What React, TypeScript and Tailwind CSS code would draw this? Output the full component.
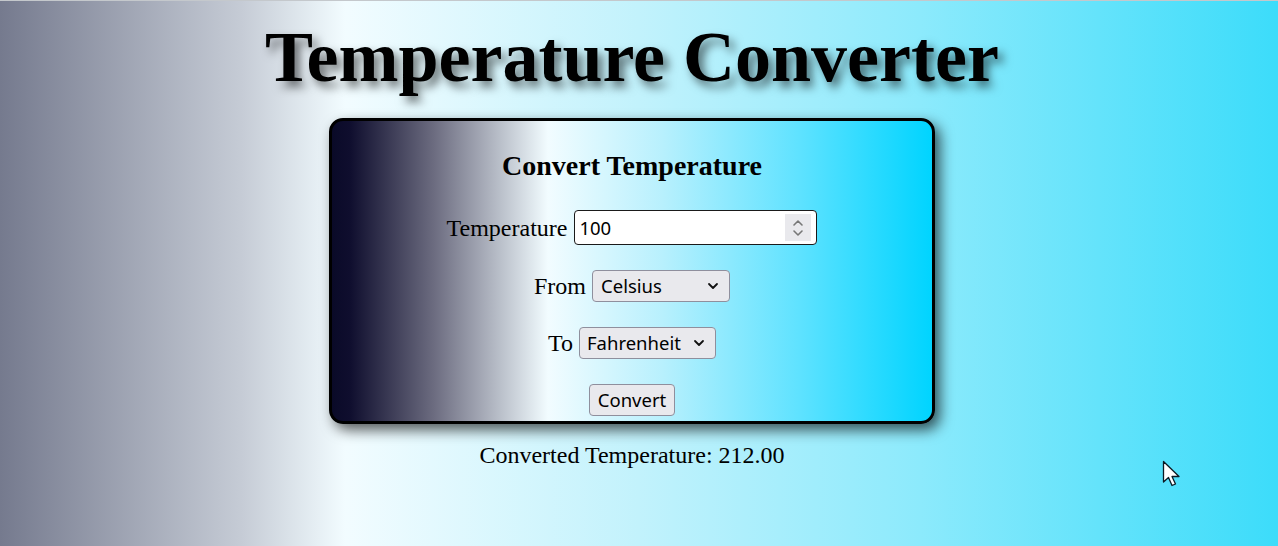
import { useState } from "react";

function Chevron() {
  return (
    <svg width="12" height="8" viewBox="0 0 12 8" className="pointer-events-none absolute right-[11px] top-1/2 -translate-y-1/2">
      <path d="M2 2 L6 6 L10 2" fill="none" stroke="#111" strokeWidth="1.8" strokeLinecap="round" strokeLinejoin="round" />
    </svg>
  );
}

function Cursor() {
  return (
    <svg width="20" height="30" viewBox="0 0 20 30" className="absolute left-[1162px] top-[459px]">
      <path d="M1.5 1.5 L1.5 22 L6.5 17.5 L10 25.5 L13.5 24 L10 16.5 L17 16.5 Z" fill="#fff" stroke="#0c1a24" strokeWidth="1.3" strokeLinejoin="round" />
    </svg>
  );
}

export default function App() {
  const [temp, setTemp] = useState("100");
  const [from, setFrom] = useState("Celsius");
  const [to, setTo] = useState("Fahrenheit");

  const serif = "font-['Liberation_Serif','Times_New_Roman',serif]";
  const sans = "font-['Noto_Sans','Open_Sans',sans-serif]";

  return (
    <main className="relative min-h-screen overflow-hidden border-t border-[#c4c8cc] bg-[linear-gradient(to_right,#757a8e_0%,#c6ccd6_19%,#f2fcff_27%,#c2f2fc_50%,#8ceafc_72%,#3cdcfa_100%)] pr-[14px] text-black">
      <div className="flex flex-col items-center">
        <h1 className={`${serif} mt-[20px] text-[72px] font-bold leading-none [text-shadow:5px_6px_10px_rgba(0,0,0,0.55)]`}>
          Temperature Converter
        </h1>

        <section className="mt-[25px] box-border flex h-[306px] w-[606px] flex-col items-center rounded-[14px] border-[3px] border-black bg-[linear-gradient(to_right,#0a0a28_0%,#0f0e2e_3%,#6c6c80_17%,#f2fcff_36%,#b8f0fd_55%,#5ee2ff_78%,#00d4ff_100%)] pt-[29px] shadow-[5px_6px_14px_rgba(0,0,0,0.65)]">
          <h2 className={`${serif} text-[28px] font-bold leading-[32px]`}>Convert Temperature</h2>

          <div className="mt-[28px] flex h-[35px] items-center gap-[7px]">
            <label className={`${serif} text-[24px] leading-[28px]`}>Temperature</label>
            <div className="flex h-[35px] w-[243px] items-center rounded-[4px] border border-[#1a1a1a] bg-white pl-[4px] pr-[5px]">
              <input
                value={temp}
                onChange={(e) => setTemp(e.target.value)}
                className={`${sans} min-w-0 flex-1 bg-transparent text-[18.5px] outline-none`}
              />
              <div className="flex h-[27px] w-[26px] flex-col items-center justify-center bg-[#e9e9ed]">
                <svg width="12" height="22" viewBox="0 0 12 22">
                  <path d="M2 8 L6 4 L10 8" fill="none" stroke="#777" strokeWidth="1.6" strokeLinecap="round" strokeLinejoin="round" />
                  <path d="M2 14 L6 18 L10 14" fill="none" stroke="#777" strokeWidth="1.6" strokeLinecap="round" strokeLinejoin="round" />
                </svg>
              </div>
            </div>
          </div>

          <div className="mt-[25px] flex h-[32px] items-center gap-[6px]">
            <label className={`${serif} text-[24px] leading-[28px]`}>From</label>
            <div className="relative flex">
              <select
                value={from}
                onChange={(e) => setFrom(e.target.value)}
                className={`${sans} h-[32px] w-[138px] appearance-none rounded-[4px] border border-[#8f8f9d] bg-[#e9e9ed] pl-[8px] text-[18.5px] outline-none`}
              >
                <option>Celsius</option>
                <option>Fahrenheit</option>
                <option>Kelvin</option>
              </select>
              <Chevron />
            </div>
          </div>

          <div className="mt-[25px] flex h-[32px] items-center gap-[6px]">
            <label className={`${serif} text-[24px] leading-[28px]`}>To</label>
            <div className="relative flex">
              <select
                value={to}
                onChange={(e) => setTo(e.target.value)}
                className={`${sans} h-[32px] w-[137px] appearance-none rounded-[4px] border border-[#8f8f9d] bg-[#e9e9ed] pl-[7px] text-[18.5px] outline-none`}
              >
                <option>Celsius</option>
                <option>Fahrenheit</option>
                <option>Kelvin</option>
              </select>
              <Chevron />
            </div>
          </div>

          <button className={`${sans} mt-[25px] h-[32px] w-[86px] rounded-[4px] border border-[#8f8f9d] bg-[#e9e9ed] text-[18.5px]`}>
            Convert
          </button>
        </section>

        <p className={`${serif} mt-[17px] text-[24px] leading-[28px]`}>Converted Temperature: 212.00</p>
      </div>
      <Cursor />
    </main>
  );
}
